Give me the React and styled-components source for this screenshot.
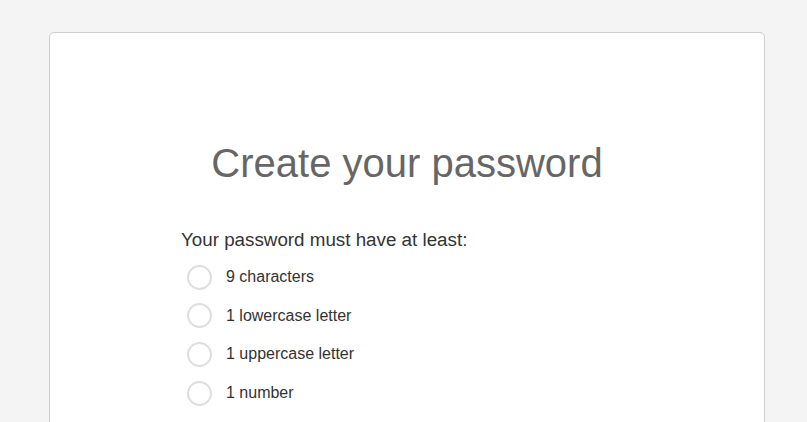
import React from 'react';
import styled, {createGlobalStyle} from 'styled-components';

const rules = ['9 characters', '1 lowercase letter', '1 uppercase letter', '1 number'];

const GlobalStyle = createGlobalStyle`
  html, body {
    margin: 0;
    padding: 0;
    background: #f4f4f4;
    font-family: "Liberation Sans", Arial, sans-serif;
  }
`;

const Page = styled.div`
  padding: 32px 0 0 49px;
  height: 422px;
  box-sizing: border-box;
  overflow: hidden;
`;

const Card = styled.div`
  width: 716px;
  height: 520px;
  box-sizing: border-box;
  background: #fff;
  border: 1px solid #cfcfcf;
  border-radius: 5px;
  padding-top: 107px;
  display: flex;
  flex-direction: column;
  align-items: center;
`;

const Title = styled.h1`
  margin: 0;
  font-size: 40px;
  line-height: 46px;
  font-weight: normal;
  color: #666;
`;

const Rules = styled.div`
  width: 452px;
  margin-top: 43px;
`;

const Lead = styled.p`
  margin: 0;
  font-size: 18.8px;
  line-height: 21px;
  color: #333;
`;

const List = styled.ul`
  list-style: none;
  margin: 8px 0 0;
  padding: 0;
`;

const Item = styled.li`
  display: flex;
  align-items: center;
  height: 38.6px;
  font-size: 16px;
  color: #333;
`;

const Check = styled.span`
  width: 25px;
  height: 25px;
  box-sizing: border-box;
  border: 2px solid #dedede;
  border-radius: 50%;
  margin: 0 14px 0 6px;
  flex-shrink: 0;
`;

const App = () => {
  return (
    <Page>
      <GlobalStyle />
      <Card>
        <Title>Create your password</Title>
        <Rules>
          <Lead>Your password must have at least:</Lead>
          <List>
            {rules.map((r, i) => (
              <Item key={i}>
                <Check />
                {r}
              </Item>
            ))}
          </List>
        </Rules>
      </Card>
    </Page>
  );
};

export default App;
